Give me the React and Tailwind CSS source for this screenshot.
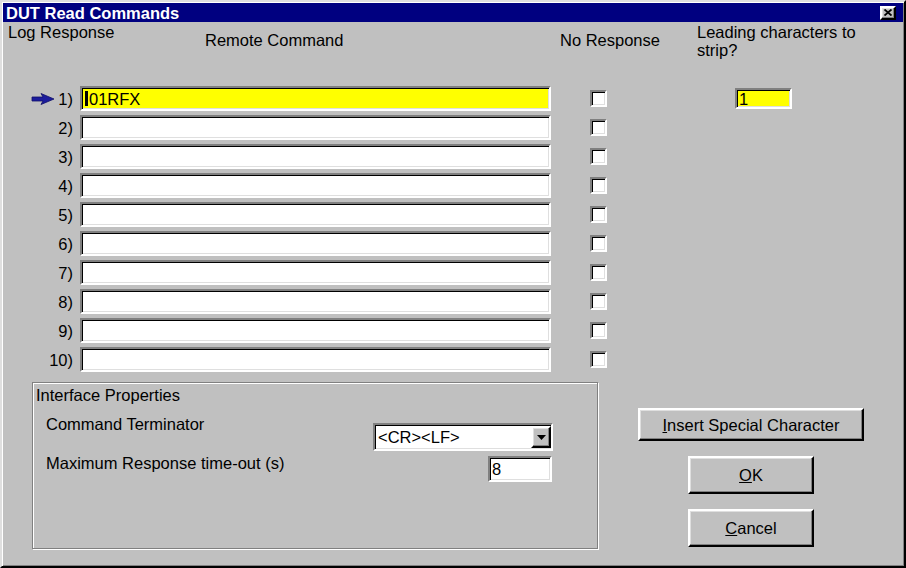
const FONT = { fontFamily: '"Liberation Sans", Arial, sans-serif' }

const sunken =
  'border-2 border-t-[#808080] border-l-[#808080] border-r-white border-b-white shadow-[inset_1px_1px_0_#000,inset_-1px_-1px_0_#dfdfdf]'
const raised =
  'border-2 border-t-white border-l-white border-r-black border-b-black shadow-[inset_-1px_-1px_0_#808080,inset_1px_1px_0_#dfdfdf]'

function Arrow() {
  return (
    <svg width="24" height="12" viewBox="0 0 24 12">
      <path d="M1 4 H12 L10 0.5 L23 6 L10 11.5 L12 8 H1 Z" fill="#1c1c9c" stroke="#10106a" strokeWidth="0.8" />
    </svg>
  )
}

function Row({ n, value, first }) {
  return (
    <div className="flex h-[29px] items-center">
      <div className="flex w-[78px] items-center justify-end gap-[3px] pr-[7px]">
        {first && <Arrow />}
        <span>{n})</span>
      </div>
      <div className={`${sunken} flex h-[25px] w-[471px] items-center px-[3px] ${first ? 'bg-[#ffff00]' : 'bg-white'}`}>
        {first && <span className="mr-[1px] h-[15px] w-[3px] bg-black" />}
        <span>{value}</span>
      </div>
      <div className={`${sunken} ml-[39px] h-[17px] w-[17px] bg-white`} />
      {first && (
        <div className={`${sunken} ml-[128px] flex h-[21px] w-[57px] items-center bg-[#ffff00] px-[2px]`}>
          1
        </div>
      )}
    </div>
  )
}

function Button({ children, className }) {
  return (
    <div className={`${raised} flex items-center justify-center bg-[#c0c0c0] ${className}`}>{children}</div>
  )
}

export default function App() {
  const rows = Array.from({ length: 10 }, (_, i) => i + 1)
  return (
    <div
      style={FONT}
      className="flex h-[568px] w-[906px] flex-col border-2 border-t-[#dfdfdf] border-l-[#dfdfdf] border-r-black border-b-black bg-[#c0c0c0] text-[16.5px] leading-[16px] text-black shadow-[inset_1px_1px_0_#fff,inset_-1px_-1px_0_#808080]"
    >
      {/* title bar */}
      <div className="mx-[1px] mt-[1px] flex h-[19px] items-center justify-between bg-[#000080] pl-[3px] pr-[7px]">
        <span className="font-bold text-white">DUT Read Commands</span>
        <div className={`${raised} flex h-[14px] w-[16px] items-center justify-center bg-[#c0c0c0]`}>
          <svg width="8" height="7" viewBox="0 0 8 7">
            <path d="M0.5 0.5 L7.5 6.5 M7.5 0.5 L0.5 6.5" stroke="#000" strokeWidth="1.8" />
          </svg>
        </div>
      </div>

      {/* column headers */}
      <div className="flex h-[62px]">
        <div className="w-[203px] pl-[6px] pt-[2px]">Log Response</div>
        <div className="w-[355px] pt-[10px]">Remote Command</div>
        <div className="w-[137px] pt-[10px]">No Response</div>
        <div className="w-[170px] pt-[1px] leading-[18px]">
          Leading characters to
          <br />
          strip?
        </div>
      </div>

      {/* command rows */}
      <div className="flex flex-col">
        {rows.map((n) => (
          <Row key={n} n={n} first={n === 1} value={n === 1 ? '01RFX' : ''} />
        ))}
      </div>

      {/* bottom section */}
      <div className="flex">
        <div className="ml-[30px] mt-[8px] flex h-[167px] w-[566px] flex-col border border-[#808080] shadow-[inset_1px_1px_0_#fff,1px_1px_0_#fff]">
          <div className="pl-[3px] pt-[4px]">Interface Properties</div>
          <div className="mt-[13px] flex items-start">
            <span className="pl-[13px]">Command Terminator</span>
            <div className={`${sunken} ml-auto mr-[44px] mt-[7px] flex h-[28px] w-[180px] items-center bg-white pl-[3px]`}>
              <span className="flex-1">&lt;CR&gt;&lt;LF&gt;</span>
              <div className={`${raised} flex h-[22px] w-[20px] items-center justify-center bg-[#c0c0c0]`}>
                <svg width="9" height="5" viewBox="0 0 9 5">
                  <path d="M0 0 H9 L4.5 5 Z" fill="#000" />
                </svg>
              </div>
            </div>
          </div>
          <div className="mt-[4px] flex items-start">
            <span className="pl-[13px]">Maximum Response time-out (s)</span>
            <div className={`${sunken} ml-auto mr-[45px] mt-[1px] flex h-[26px] w-[64px] items-center bg-white px-[2px]`}>
              8
            </div>
          </div>
        </div>

        <div className="ml-[40px] flex flex-col">
          <Button className="mt-[34px] h-[33px] w-[226px]">
            <span>
              <u>I</u>nsert Special Character
            </span>
          </Button>
          <Button className="ml-[50px] mt-[15px] h-[38px] w-[126px]">
            <span>
              <u>O</u>K
            </span>
          </Button>
          <Button className="ml-[50px] mt-[15px] h-[38px] w-[126px]">
            <span>
              <u>C</u>ancel
            </span>
          </Button>
        </div>
      </div>
    </div>
  )
}
